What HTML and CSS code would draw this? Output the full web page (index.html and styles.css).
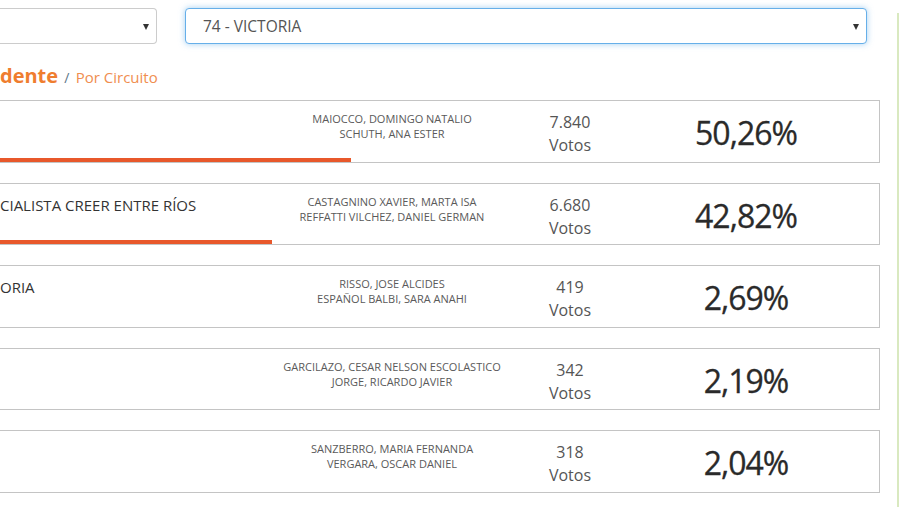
FILE: index.html
```html
<!DOCTYPE html>
<html lang="es">
<head>
<meta charset="utf-8">
<title>Resultados por circuito</title>
<link rel="stylesheet" href="styles.css">
</head>
<body>
<div class="page">
  <main class="content">
    <div class="filters">
      <div class="select narrow"><span class="value"></span><span class="caret"></span></div>
      <div class="select wide focus"><span class="value">74 - VICTORIA</span><span class="caret"></span></div>
    </div>
    <h2 class="title"><span class="main">dente</span> <span class="sep">/</span> <span class="sub">Por Circuito</span></h2>
    <div class="list">
      <div class="card">
        <div class="row">
          <div class="name"></div>
          <div class="cands">MAIOCCO, DOMINGO NATALIO<br>SCHUTH, ANA ESTER</div>
          <div class="votes">7.840<br>Votos</div>
          <div class="pct">50,26%</div>
        </div>
        <div class="bar" style="width:39.9%"></div>
      </div>
      <div class="card">
        <div class="row">
          <div class="name">CIALISTA CREER ENTRE RÍOS</div>
          <div class="cands">CASTAGNINO XAVIER, MARTA ISA<br>REFFATTI VILCHEZ, DANIEL GERMAN</div>
          <div class="votes">6.680<br>Votos</div>
          <div class="pct">42,82%</div>
        </div>
        <div class="bar" style="width:31%"></div>
      </div>
      <div class="card">
        <div class="row">
          <div class="name">ORIA</div>
          <div class="cands">RISSO, JOSE ALCIDES<br>ESPAÑOL BALBI, SARA ANAHI</div>
          <div class="votes">419<br>Votos</div>
          <div class="pct">2,69%</div>
        </div>
        <div class="bar" style="width:0"></div>
      </div>
      <div class="card">
        <div class="row">
          <div class="name"></div>
          <div class="cands">GARCILAZO, CESAR NELSON ESCOLASTICO<br>JORGE, RICARDO JAVIER</div>
          <div class="votes">342<br>Votos</div>
          <div class="pct">2,19%</div>
        </div>
        <div class="bar" style="width:0"></div>
      </div>
      <div class="card">
        <div class="row">
          <div class="name"></div>
          <div class="cands">SANZBERRO, MARIA FERNANDA<br>VERGARA, OSCAR DANIEL</div>
          <div class="votes">318<br>Votos</div>
          <div class="pct">2,04%</div>
        </div>
        <div class="bar" style="width:0"></div>
      </div>
    </div>
  </main>
  <aside class="side"></aside>
</div>
</body>
</html>
```

FILE: styles.css
```css
* { box-sizing: border-box; }
html, body { margin: 0; padding: 0; background: #fff; }
body {
  font-family: "Open Sans", "Noto Sans", "DejaVu Sans", sans-serif;
  color: #333;
  overflow: hidden;
  height: 507px;
}
.page {
  display: flex;
  height: 507px;
}
.content {
  width: 880px;
  flex: none;
}
.side {
  margin-left: 17px;
  margin-top: 13px;
  border-left: 2px solid #d9e9c0;
  width: 3px;
}
.filters {
  display: flex;
  gap: 28px;
  padding-top: 8px;
}
.select {
  height: 36px;
  border: 1px solid #cccccc;
  border-radius: 4px;
  display: flex;
  align-items: center;
  justify-content: space-between;
  padding: 0 7px 0 17px;
  background: #fff;
}
.select.narrow {
  width: 157px;
  border-left: none;
  border-top-left-radius: 0;
  border-bottom-left-radius: 0;
}
.select.wide {
  width: 682px;
}
.select.focus {
  border-color: #66afe9;
  box-shadow: 0 0 6px rgba(102, 175, 233, 0.6);
}
.value {
  font-size: 15.5px;
  color: #555;
}
.caret {
  width: 0;
  height: 0;
  border-left: 3.5px solid transparent;
  border-right: 3.5px solid transparent;
  border-top: 6px solid #333;
  margin-top: 1px;
}
.title {
  margin: 16px 0 12px;
  line-height: 28px;
  height: 28px;
  font-weight: normal;
  white-space: nowrap;
}
.title .main {
  font-size: 20px;
  font-weight: 700;
  color: #ef7d2f;
}
.title .sep {
  font-size: 14px;
  color: #5d7588;
}
.title .sub {
  font-size: 15px;
  color: #f08e4f;
}
.list {
  display: flex;
  flex-direction: column;
  gap: 20px;
}
.card {
  height: 62.5px;
  border: 1px solid #c4c4c4;
  border-left: none;
  display: flex;
  flex-direction: column;
}
.row {
  flex: 1;
  display: grid;
  grid-template-columns: 282px 220px 136px 216px;
  min-height: 0;
}
.name {
  padding-top: 11px;
  font-size: 15px;
  line-height: 21px;
  color: #333;
  white-space: nowrap;
  overflow: hidden;
}
.cands {
  padding-top: 10px;
  font-size: 11px;
  line-height: 15px;
  color: #5a5a5a;
  text-align: center;
  white-space: nowrap;
}
.votes {
  padding-top: 10px;
  font-size: 16px;
  line-height: 23px;
  color: #555;
  text-align: center;
}
.pct {
  padding-top: 12px;
  font-size: 32px;
  line-height: 40px;
  letter-spacing: -1px;
  color: #2a2a2a;
  text-align: center;
  -webkit-text-stroke: 0.3px #2a2a2a;
}
.bar {
  height: 4px;
  background: #e8582b;
  flex: none;
}
```
